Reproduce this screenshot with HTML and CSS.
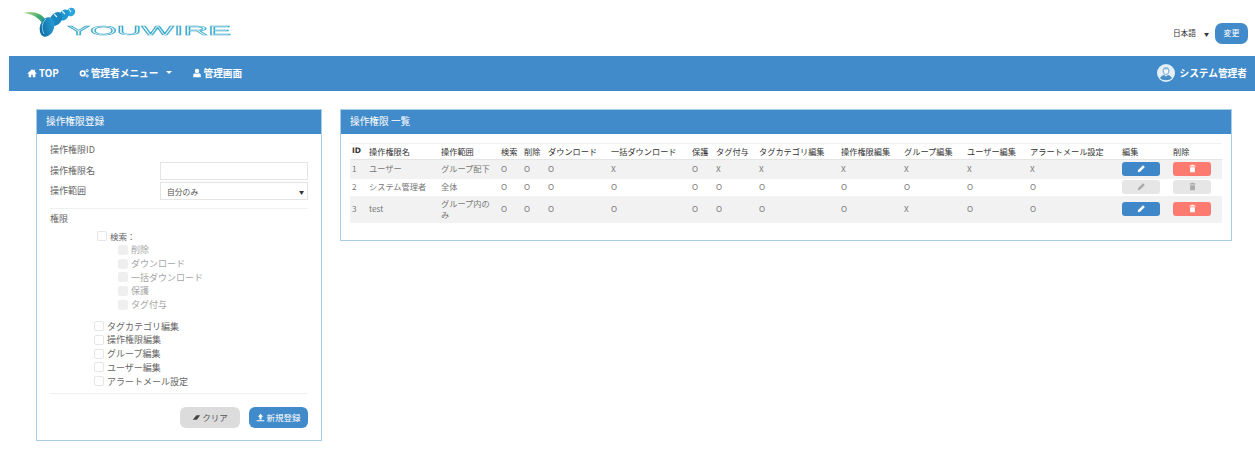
FILE: index.html
```html
<!DOCTYPE html>
<html lang="ja">
  <head>
    <meta charset="UTF-8" />
    <meta name="viewport" content="width=device-width, initial-scale=1.0" />
    <title>YOUWIRE 操作権限</title>
    <link rel="stylesheet" href="styles.css">
  </head>
  <body>
    <svg class="icon-defs" width="0" height="0">
      <defs>
        <symbol id="i-pencil" viewBox="0 0 12 12"><path d="M1 11l.6-3L8 1.6 10.4 4 4 10.4z"/></symbol>
        <symbol id="i-trash" viewBox="0 0 12 12"><path d="M4.500 1h3l.5 1h2v1.400H2V2h2zM2.800 4.200h6.400V11H2.800z"/></symbol>
      </defs>
    </svg>

    <!-- Header -->
    <div class="top">
      <svg class="logo" width="215" height="40" viewBox="0 0 215 40">
        <defs>
          <linearGradient id="tail" x1="0" y1="0" x2="1" y2="0.6">
            <stop offset="0" stop-color="#c4e29a"/>
            <stop offset="0.6" stop-color="#3ea96a"/>
            <stop offset="1" stop-color="#1c8fb0"/>
          </linearGradient>
          <linearGradient id="body" x1="0" y1="1" x2="1" y2="0">
            <stop offset="0" stop-color="#0e5f98"/>
            <stop offset="1" stop-color="#2aa6de"/>
          </linearGradient>
        </defs>
        <path d="M0 8 C10 5 21 8 26 20 L22 23 C18 14 11 9 0 8z" fill="url(#tail)"/>
        <ellipse cx="48" cy="7" rx="4" ry="4.500" transform="rotate(35 48 7)" fill="#2aa6de"/>
        <ellipse cx="41" cy="10" rx="4.500" ry="6" transform="rotate(35 41 10)" fill="#1f97d2"/>
        <ellipse cx="33" cy="14" rx="5.500" ry="7.500" transform="rotate(35 33 14)" fill="#1a86c0"/>
        <ellipse cx="24" cy="22" rx="7" ry="10" transform="rotate(20 24 22)" fill="url(#body)"/>
        <path d="M23 14c-4 3-5 9-2 15" stroke="#7fcdea" stroke-width="1" fill="none"/>
        <path d="M31 9l3 3M39 6l3 3M46 4l2 3" stroke="#d5eff8" stroke-width="1.200" fill="none"/>
        <text class="logo-word" x="44" y="30" textLength="164" lengthAdjust="spacingAndGlyphs">YOUWIRE</text>
      </svg>
      <div class="lang">
        <span class="lang-name">日本語</span>
        <span class="caret">▼</span>
        <button class="btn-change">変更</button>
      </div>
    </div>

    <!-- Nav -->
    <div class="nav">
      <a class="nav-item">
        <svg class="nav-icon" viewBox="0 0 12 12"><path d="M6 1.500L.5 6.500l.7.700L2 6.500V11h3V8h2v3h3V6.500l.8.700.7-.700L9.500 4.300V2H8v.900z"/></svg>TOP
      </a>
      <a class="nav-item">
        <svg class="nav-icon" viewBox="0 0 12 12"><circle cx="4.500" cy="6.500" r="2.700" fill="none" stroke="#fff" stroke-width="2"/><circle cx="9.800" cy="3.200" r="1.300" fill="none" stroke="#fff" stroke-width="1.200"/><circle cx="9.800" cy="9.500" r="1.300" fill="none" stroke="#fff" stroke-width="1.200"/></svg>管理者メニュー<span class="nav-caret"></span>
      </a>
      <a class="nav-item">
        <svg class="nav-icon" viewBox="0 0 12 12"><circle cx="6" cy="3.500" r="2.600"/><path d="M1.500 11V8.500C1.500 7 3 6.500 4 6.300c1 .8 3 .8 4 0 1 .2 2.500.7 2.500 2.200V11z"/></svg>管理画面
      </a>
      <div class="nav-user">
        <svg class="avatar" viewBox="0 0 18 18">
          <circle cx="9" cy="9" r="9" fill="#e4eff8"/>
          <path d="M5.500 7c0-2.500 1.500-4 3.500-4s3.500 1.500 3.500 4c0 2-1.500 4-3.500 4S5.500 9 5.500 7z" fill="#8db9dc"/>
          <path d="M7 5.500h4v2.500c0 1-1 1.800-2 1.800S7 9 7 8z" fill="#f4f8fb"/>
          <path d="M3 14c1.500-2.500 4-3 4-3l2 1.500 2-1.500s2.500.5 4 3c-2 3-10 3-12 0z" fill="#4a8fc8"/>
        </svg>
        システム管理者
      </div>
    </div>

    <div class="content">
      <!-- Registration form -->
      <div class="panel panel-form">
        <div class="panel-head">操作権限登録</div>
        <div class="panel-body">
          <div class="form-row form-row-id"><label>操作権限ID</label></div>
          <div class="form-row"><label>操作権限名</label><input class="field" type="text" /></div>
          <div class="form-row"><label>操作範囲</label><div class="field field-select">自分のみ<span class="caret">▼</span></div></div>
          <hr />
          <div class="perm-title">権限</div>
          <div class="check check-parent"><span class="box"></span>検索：</div>
          <div class="sub-checks">
            <div class="check"><span class="box box-off"></span>削除</div>
            <div class="check"><span class="box box-off"></span>ダウンロード</div>
            <div class="check"><span class="box box-off"></span>一括ダウンロード</div>
            <div class="check"><span class="box box-off"></span>保護</div>
            <div class="check"><span class="box box-off"></span>タグ付与</div>
          </div>
          <div class="main-checks">
            <div class="check"><span class="box"></span>タグカテゴリ編集</div>
            <div class="check"><span class="box"></span>操作権限編集</div>
            <div class="check"><span class="box"></span>グループ編集</div>
            <div class="check"><span class="box"></span>ユーザー編集</div>
            <div class="check"><span class="box"></span>アラートメール設定</div>
          </div>
          <hr class="hr-bottom" />
          <div class="form-actions">
            <button class="btn btn-clear">
              <svg class="btn-icon" viewBox="0 0 12 12"><path d="M1 9l5-6h5L6.500 9z" fill="#444"/></svg>クリア
            </button>
            <button class="btn btn-new">
              <svg class="btn-icon" viewBox="0 0 12 12"><path d="M6 1l3.500 4H7.400v3.500H4.600V5H2.500zM1 9.500h10V11H1z" fill="#fff"/></svg>新規登録
            </button>
          </div>
        </div>
      </div>

      <!-- List -->
      <div class="panel panel-list">
        <div class="panel-head">操作権限 一覧</div>
        <div class="panel-body">
          <table class="list">
            <colgroup>
              <col class="c-id"><col class="c-name"><col class="c-range"><col class="c-search"><col class="c-del"><col class="c-dl">
              <col class="c-bulk"><col class="c-protect"><col class="c-tag"><col class="c-cat"><col class="c-auth"><col class="c-group">
              <col class="c-user"><col class="c-alert"><col class="c-edit"><col class="c-remove">
            </colgroup>
            <thead>
              <tr>
                <th class="th-id">ID</th><th>操作権限名</th><th>操作範囲</th><th>検索</th><th>削除</th><th>ダウンロード</th>
                <th>一括ダウンロード</th><th>保護</th><th>タグ付与</th><th>タグカテゴリ編集</th><th>操作権限編集</th><th>グループ編集</th>
                <th>ユーザー編集</th><th>アラートメール設定</th><th>編集</th><th>削除</th>
              </tr>
            </thead>
            <tbody>
              <tr class="row-1">
                <td>1</td><td>ユーザー</td><td>グループ配下</td><td>O</td><td>O</td><td>O</td><td>X</td><td>O</td><td>X</td><td>X</td><td>X</td><td>X</td><td>X</td><td>X</td>
                <td><span class="act act-edit"><svg><use href="#i-pencil"/></svg></span></td>
                <td><span class="act act-remove"><svg><use href="#i-trash"/></svg></span></td>
              </tr>
              <tr class="row-2">
                <td>2</td><td>システム管理者</td><td>全体</td><td>O</td><td>O</td><td>O</td><td>O</td><td>O</td><td>O</td><td>O</td><td>O</td><td>O</td><td>O</td><td>O</td>
                <td><span class="act act-off"><svg><use href="#i-pencil"/></svg></span></td>
                <td><span class="act act-off"><svg><use href="#i-trash"/></svg></span></td>
              </tr>
              <tr class="row-3">
                <td>3</td><td>test</td><td>グループ内のみ</td><td>O</td><td>O</td><td>O</td><td>O</td><td>O</td><td>O</td><td>O</td><td>O</td><td>X</td><td>O</td><td>O</td>
                <td><span class="act act-edit"><svg><use href="#i-pencil"/></svg></span></td>
                <td><span class="act act-remove"><svg><use href="#i-trash"/></svg></span></td>
              </tr>
            </tbody>
          </table>
        </div>
      </div>
    </div>
  </body>
</html>
```

FILE: styles.css
```css
body {
  margin: 0;
  padding: 0;
  background-color: #fff;
  color: #666;
  font-family: "Noto Sans CJK JP", "Noto Sans", sans-serif;
  font-size: 9px;
}

.icon-defs {
  position: absolute;
}

/* Header */
.top {
  height: 56px;
  padding: 5px 7px 0 23px;
  box-sizing: border-box;
  display: flex;
  justify-content: space-between;
}

.logo {
  display: block;
}

.logo-word {
  font-family: "Liberation Sans", sans-serif;
  font-size: 12px;
  fill: none;
  stroke: #29a6c6;
  stroke-width: 0.500px;
}

.lang {
  display: flex;
  align-items: center;
  height: 21px;
  margin-top: 18px;
  color: #333;
  font-size: 7.700px;
}

.lang-name {
  padding-bottom: 3px;
}

.caret {
  font-size: 5px;
  color: #333;
}

.lang .caret {
  margin: 0 6px 0 8px;
}

.btn-change {
  width: 33px;
  height: 21px;
  padding: 0 0 2px;
  border: none;
  border-radius: 7px;
  background-color: #428bca;
  color: #fff;
  font-family: inherit;
  font-size: 8px;
}

/* Nav */
.nav {
  margin-left: 9px;
  height: 35px;
  padding: 0 8px 2px 18px;
  box-sizing: border-box;
  background-color: #428bca;
  color: #fff;
  font-size: 9.700px;
  font-weight: 700;
  display: flex;
  align-items: center;
  gap: 20px;
}

.nav-item {
  display: flex;
  align-items: center;
}

.nav-icon {
  width: 10px;
  height: 10px;
  margin-right: 2px;
  fill: #fff;
}

.nav-caret {
  margin-left: 7px;
  border: 3px solid transparent;
  border-top-color: #fff;
  border-bottom: none;
}

.nav-user {
  margin-left: auto;
  display: flex;
  align-items: center;
  gap: 4px;
}

.avatar {
  width: 18px;
  height: 18px;
}

/* Panels */
.content {
  display: flex;
  align-items: flex-start;
  gap: 18px;
  padding: 18px 23px 0 36px;
}

.panel {
  border: 1px solid #a8cde6;
  box-sizing: border-box;
}

.panel-form {
  width: 286px;
  height: 332px;
  flex: none;
}

.panel-list {
  flex: 1;
  height: 132px;
}

.panel-head {
  height: 24px;
  line-height: 22px;
  padding-left: 9px;
  background-color: #428bca;
  color: #fff;
  font-size: 9.700px;
}

/* Form */
.panel-form .panel-body {
  padding: 0 13px;
}

.form-row {
  display: flex;
  align-items: center;
  height: 20px;
}

.form-row-id {
  height: 27px;
  padding-top: 3px;
  box-sizing: border-box;
}

.form-row label {
  width: 110px;
  padding-bottom: 2px;
  flex: none;
}

.form-row-id label {
  padding-bottom: 0;
}

.field {
  width: 148px;
  height: 18px;
  padding: 0 6px;
  border: 1px solid #e4e4e4;
  box-sizing: border-box;
  background-color: #fff;
  color: #555;
  font-family: inherit;
  font-size: 7.800px;
}

.field-select {
  display: flex;
  align-items: center;
  justify-content: space-between;
  padding-right: 3px;
}

hr {
  margin: 7px 0 0;
  border: none;
  border-top: 1px solid #f0f0f0;
}

.perm-title {
  height: 18px;
  line-height: 18px;
  margin-top: 1px;
}

.check {
  display: flex;
  align-items: center;
  height: 13.700px;
}

.box {
  width: 10px;
  height: 10px;
  margin-right: 3px;
  border: 1px solid #e6e6e6;
  border-radius: 2px;
  box-sizing: border-box;
  background-color: #fff;
  flex: none;
}

.box-off {
  background-color: #efefef;
  border-color: #efefef;
}

.check-parent {
  margin: 0 0 0 47px;
  height: 15px;
  font-size: 8.500px;
}

.sub-checks {
  margin-left: 68px;
  color: #a5a5a5;
}

.main-checks {
  margin: 8px 0 0 44px;
}

.hr-bottom {
  margin-top: 5px;
}

.form-actions {
  display: flex;
  justify-content: flex-end;
  gap: 9px;
  margin-top: 13px;
}

.btn {
  display: flex;
  align-items: center;
  justify-content: center;
  width: 60px;
  height: 21px;
  padding: 0;
  border: none;
  border-radius: 6px;
  font-family: inherit;
  font-size: 8.500px;
}

.btn-icon {
  width: 9px;
  height: 9px;
  margin-right: 1px;
}

.btn-clear {
  background-color: #dcdcdc;
  color: #555;
}

.btn-new {
  width: 59px;
  background-color: #428bca;
  color: #fff;
}

/* List table */
.panel-list .panel-body {
  padding: 9px 9px 0 9px;
}

.list {
  width: 872px;
  table-layout: fixed;
  border-collapse: collapse;
  font-size: 8.200px;
}

.c-id { width: 19px; }
.c-name { width: 72px; }
.c-range { width: 60px; }
.c-search { width: 23px; }
.c-del { width: 24px; }
.c-dl { width: 63px; }
.c-bulk { width: 81px; }
.c-protect { width: 24px; }
.c-tag { width: 43px; }
.c-cat { width: 82px; }
.c-auth { width: 63px; }
.c-group { width: 63px; }
.c-user { width: 63px; }
.c-alert { width: 92px; }
.c-edit { width: 51px; }
.c-remove { width: 49px; }

.list th {
  height: 16px;
  padding: 0 0 2px;
  border-top: 1px solid #f0f0f0;
  border-bottom: 1px solid #e4e4e4;
  box-sizing: border-box;
  text-align: left;
  font-weight: 400;
  color: #333;
  white-space: nowrap;
}

.list .th-id {
  padding-left: 2px;
  font-family: "DejaVu Sans", sans-serif;
  font-weight: 700;
  font-size: 7.500px;
}

.list td {
  padding: 0 8px 1px 0;
  box-sizing: border-box;
  line-height: 11px;
  color: #777;
  white-space: normal;
}

.list td:first-child {
  padding-left: 2px;
}

.row-1 td {
  height: 19px;
  background-color: #f2f2f2;
}

.row-2 td {
  height: 17px;
}

.row-3 td {
  height: 27px;
  background-color: #f2f2f2;
}

.act {
  display: flex;
  align-items: center;
  justify-content: center;
  width: 38px;
  height: 14px;
  border-radius: 3px;
}

.act svg {
  width: 9px;
  height: 9px;
}

.act-edit {
  background-color: #3f87c8;
  fill: #fff;
}

.act-remove {
  background-color: #fc7a6f;
  fill: #fff;
}

.act-off {
  background-color: #e6e6e6;
  fill: #aaa;
}
```
